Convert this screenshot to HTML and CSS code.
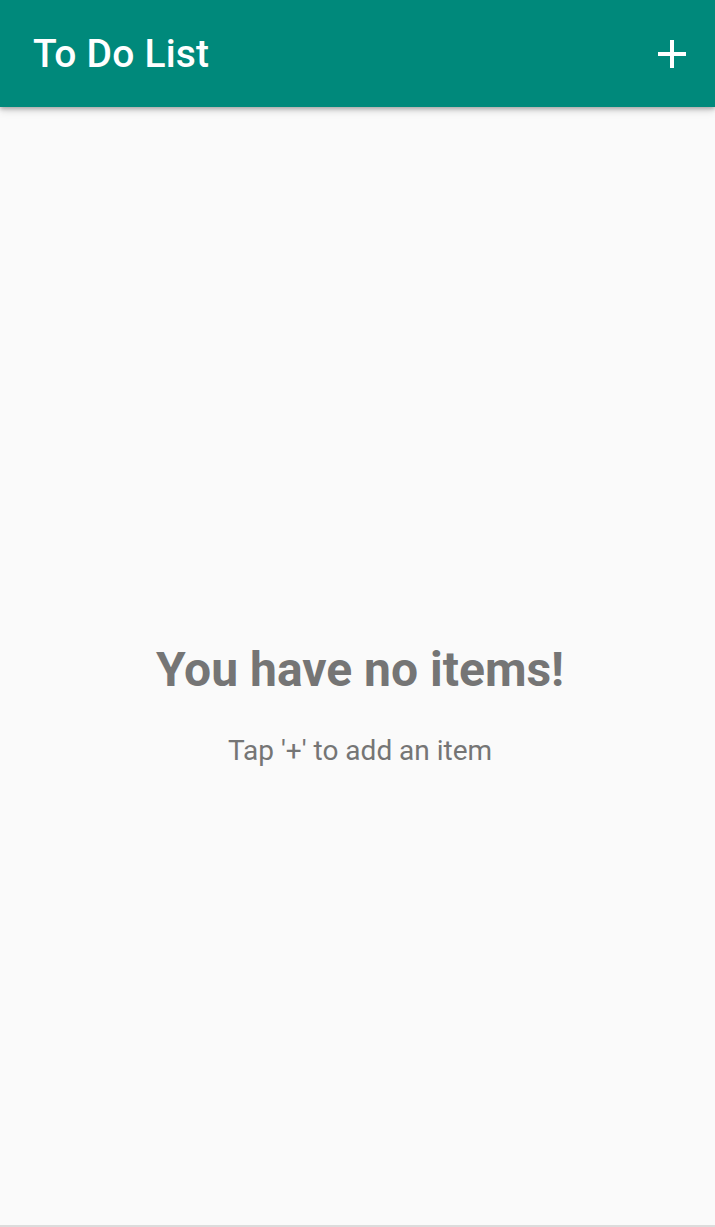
FILE: index.html
```html
<!DOCTYPE html>
<html>
<head>
<meta charset="utf-8">
<link rel="stylesheet" href="styles.css">
</head>
<body>
<div class="app">
  <header class="appbar">
    <h1 class="title">To Do List</h1>
    <button class="add-btn" aria-label="Add">
      <svg width="28" height="28" viewBox="0 0 28 28"><path d="M12 0h4v12h12v4H16v12h-4V16H0v-4h12z" fill="#fff"/></svg>
    </button>
  </header>
  <main class="empty">
    <h2 class="empty-title">You have no items!</h2>
    <p class="empty-sub">Tap '+' to add an item</p>
  </main>
  <div class="bottom-line"></div>
</div>
</body>
</html>
```
FILE: styles.css
```css
html, body { margin: 0; padding: 0; }
body {
  font-family: Roboto, "Noto Sans", sans-serif;
  background: #fafafa;
  width: 715px;
  height: 1227px;
  overflow: hidden;
}
.app {
  display: flex;
  flex-direction: column;
  height: 1227px;
}
.appbar {
  height: 107px;
  flex: none;
  background: #00897b;
  display: flex;
  align-items: center;
  justify-content: space-between;
  padding: 0 29px 0 33px;
  box-shadow: 0 2px 4px rgba(0,0,0,0.25), 0 4px 8px rgba(0,0,0,0.12);
  position: relative;
  z-index: 1;
}
.title {
  margin: 0;
  color: #fff;
  font-weight: 500;
  font-size: 39px;
  letter-spacing: 0.2px;
}
.add-btn {
  background: none;
  border: none;
  padding: 0;
  width: 28px;
  height: 28px;
  display: flex;
}
.empty {
  flex: 1;
  display: flex;
  flex-direction: column;
  align-items: center;
  justify-content: center;
  padding-top: 76px;
  padding-left: 5px;
}
.empty-title {
  margin: 0;
  color: #757575;
  font-weight: 700;
  font-size: 48px;
}
.empty-sub {
  margin: 36px 0 0;
  color: #757575;
  font-size: 28px;
}
.bottom-line {
  height: 2px;
  background: #dcdcdc;
  flex: none;
}
```
